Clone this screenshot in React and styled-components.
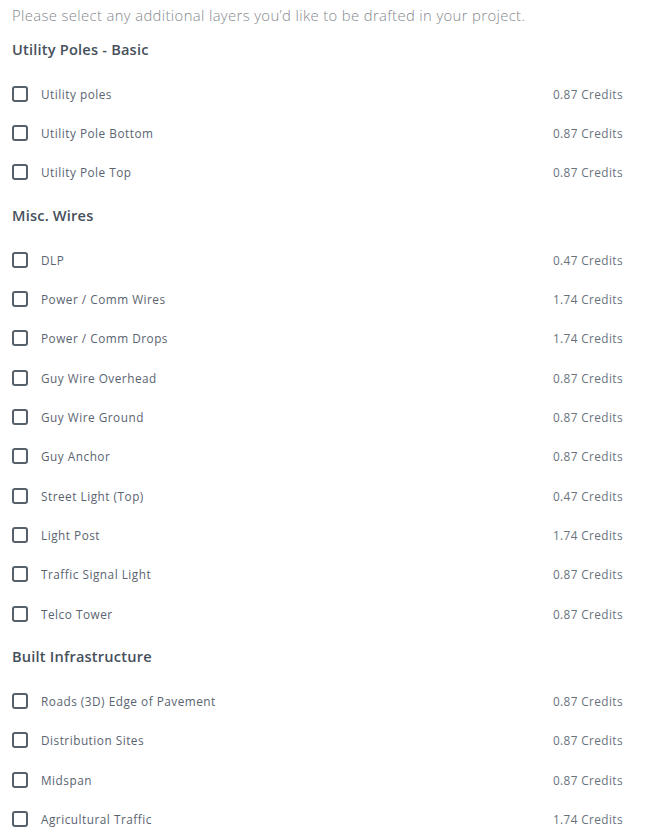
import React from "react";
import styled, { createGlobalStyle } from "styled-components";

const Global = createGlobalStyle`
  html, body { margin: 0; padding: 0; background: #ffffff; }
  body { font-family: "Open Sans", "Noto Sans", Arial, sans-serif; }
`;

const Page = styled.div`
  padding: 0 34px 0 12px;
  width: 657px;
  box-sizing: border-box;
`;

const Intro = styled.p`
  margin: 0;
  padding-top: 4px;
  line-height: 22px;
  font-size: 14.8px;
  font-weight: 300;
  color: #85898e;
  letter-spacing: 0.38px;
  white-space: nowrap;
`;

const Section = styled.section`
  display: flex;
  flex-direction: column;
`;

const Heading = styled.h3`
  margin: 0;
  padding: 12px 0 14px;
  line-height: 22px;
  font-size: 14.6px;
  font-weight: 600;
  color: #46505b;
  letter-spacing: 0.2px;
`;

const Row = styled.label`
  display: flex;
  align-items: center;
  height: 39.35px;
`;

const Box = styled.span`
  width: 16px;
  height: 16px;
  box-sizing: border-box;
  border: 2px solid #56606b;
  border-radius: 3px;
  flex: none;
`;

const Label = styled.span`
  margin-left: 13px;
  font-size: 11.8px;
  color: #5a6470;
  letter-spacing: 0.5px;
  flex: 1;
`;

const Credits = styled.span`
  font-size: 11.8px;
  color: #6a737d;
  letter-spacing: 0.4px;
`;

const sections = [
  {
    title: "Utility Poles - Basic",
    items: [
      ["Utility poles", "0.87"],
      ["Utility Pole Bottom", "0.87"],
      ["Utility Pole Top", "0.87"],
    ],
  },
  {
    title: "Misc. Wires",
    items: [
      ["DLP", "0.47"],
      ["Power / Comm Wires", "1.74"],
      ["Power / Comm Drops", "1.74"],
      ["Guy Wire Overhead", "0.87"],
      ["Guy Wire Ground", "0.87"],
      ["Guy Anchor", "0.87"],
      ["Street Light (Top)", "0.47"],
      ["Light Post", "1.74"],
      ["Traffic Signal Light", "0.87"],
      ["Telco Tower", "0.87"],
    ],
  },
  {
    title: "Built Infrastructure",
    items: [
      ["Roads (3D) Edge of Pavement", "0.87"],
      ["Distribution Sites", "0.87"],
      ["Midspan", "0.87"],
      ["Agricultural Traffic", "1.74"],
    ],
  },
];

export default function App() {
  return (
    <>
      <Global />
      <Page>
        <Intro>Please select any additional layers you’d like to be drafted in your project.</Intro>
        {sections.map((s) => (
          <Section key={s.title}>
            <Heading>{s.title}</Heading>
            {s.items.map(([name, c]) => (
              <Row key={name}>
                <Box />
                <Label>{name}</Label>
                <Credits>{c} Credits</Credits>
              </Row>
            ))}
          </Section>
        ))}
      </Page>
    </>
  );
}
